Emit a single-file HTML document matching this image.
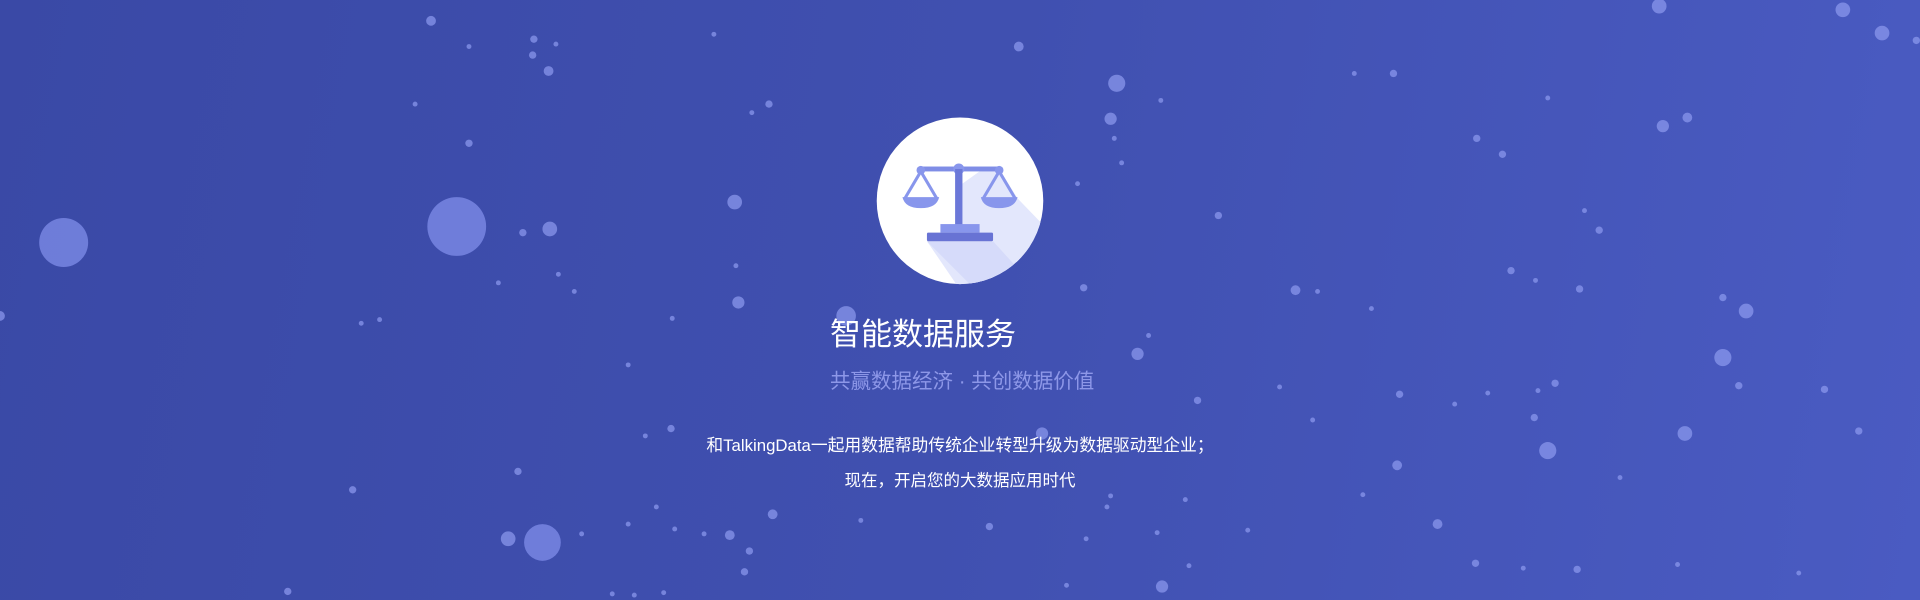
<!DOCTYPE html>
<html><head><meta charset="utf-8"><style>
html,body{margin:0;padding:0;width:1920px;height:600px;overflow:hidden}
body{position:relative;background:linear-gradient(100deg,#3a49a6 0%,#4050b0 50%,#4a5bc2 100%);font-family:"Liberation Sans","Noto Sans CJK SC",sans-serif}
svg{position:absolute;left:0;top:0}
.t{position:absolute;color:#fff;white-space:nowrap}
</style></head><body>
<svg width="1920" height="600" viewBox="0 0 1568 490" preserveAspectRatio="none">
<defs><clipPath id="c"><circle cx="784" cy="164" r="68"/></clipPath></defs>
<g fill="#8e9bf0" opacity="0.7">
<circle cx="352" cy="17" r="4"/><circle cx="383" cy="38" r="2"/><circle cx="436" cy="32" r="3"/><circle cx="454" cy="36" r="2"/><circle cx="435" cy="45" r="3"/><circle cx="448" cy="58" r="4"/><circle cx="583" cy="28" r="2"/><circle cx="832" cy="38" r="4"/><circle cx="912" cy="68" r="7"/><circle cx="948" cy="82" r="2"/><circle cx="1106" cy="60" r="2"/><circle cx="1138" cy="60" r="3"/><circle cx="1264" cy="80" r="2"/><circle cx="1355" cy="5" r="6"/><circle cx="1505" cy="8" r="6"/><circle cx="1537" cy="27" r="6"/><circle cx="1565" cy="33" r="3"/><circle cx="339" cy="85" r="2"/><circle cx="383" cy="117" r="3"/><circle cx="614" cy="92" r="2"/><circle cx="628" cy="85" r="3"/><circle cx="907" cy="97" r="5"/><circle cx="910" cy="113" r="2"/><circle cx="916" cy="133" r="2"/><circle cx="1358" cy="103" r="5"/><circle cx="1378" cy="96" r="4"/><circle cx="1206" cy="113" r="3"/><circle cx="1227" cy="126" r="3"/><circle cx="600" cy="165" r="6"/><circle cx="449" cy="187" r="6"/><circle cx="427" cy="190" r="3"/><circle cx="601" cy="217" r="2"/><circle cx="456" cy="224" r="2"/><circle cx="469" cy="238" r="2"/><circle cx="407" cy="231" r="2"/><circle cx="603" cy="247" r="5"/><circle cx="880" cy="150" r="2"/><circle cx="995" cy="176" r="3"/><circle cx="1294" cy="172" r="2"/><circle cx="1306" cy="188" r="3"/><circle cx="885" cy="235" r="3"/><circle cx="1058" cy="237" r="4"/><circle cx="1076" cy="238" r="2"/><circle cx="1234" cy="221" r="3"/><circle cx="1254" cy="229" r="2"/><circle cx="1290" cy="236" r="3"/><circle cx="1407" cy="243" r="3"/><circle cx="1426" cy="254" r="6"/><circle cx="1120" cy="252" r="2"/><circle cx="295" cy="264" r="2"/><circle cx="310" cy="261" r="2"/><circle cx="0" cy="258" r="4"/><circle cx="549" cy="260" r="2"/><circle cx="691" cy="258" r="8"/><circle cx="938" cy="274" r="2"/><circle cx="929" cy="289" r="5"/><circle cx="513" cy="298" r="2"/><circle cx="1407" cy="292" r="7"/><circle cx="1045" cy="316" r="2"/><circle cx="1143" cy="322" r="3"/><circle cx="1188" cy="330" r="2"/><circle cx="1215" cy="321" r="2"/><circle cx="1256" cy="319" r="2"/><circle cx="1270" cy="313" r="3"/><circle cx="1253" cy="341" r="3"/><circle cx="1420" cy="315" r="3"/><circle cx="1490" cy="318" r="3"/><circle cx="978" cy="327" r="3"/><circle cx="1072" cy="343" r="2"/><circle cx="548" cy="350" r="3"/><circle cx="527" cy="356" r="2"/><circle cx="1376" cy="354" r="6"/><circle cx="1518" cy="352" r="3"/><circle cx="1264" cy="368" r="7"/><circle cx="851" cy="354" r="5"/><circle cx="423" cy="385" r="3"/><circle cx="1141" cy="380" r="4"/><circle cx="288" cy="400" r="3"/><circle cx="1323" cy="390" r="2"/><circle cx="415" cy="440" r="6"/><circle cx="475" cy="436" r="2"/><circle cx="513" cy="428" r="2"/><circle cx="551" cy="432" r="2"/><circle cx="631" cy="420" r="4"/><circle cx="575" cy="436" r="2"/><circle cx="596" cy="437" r="4"/><circle cx="536" cy="414" r="2"/><circle cx="612" cy="450" r="3"/><circle cx="608" cy="467" r="3"/><circle cx="703" cy="425" r="2"/><circle cx="808" cy="430" r="3"/><circle cx="887" cy="440" r="2"/><circle cx="904" cy="414" r="2"/><circle cx="907" cy="405" r="2"/><circle cx="945" cy="435" r="2"/><circle cx="968" cy="408" r="2"/><circle cx="1019" cy="433" r="2"/><circle cx="1113" cy="404" r="2"/><circle cx="1174" cy="428" r="4"/><circle cx="1205" cy="460" r="3"/><circle cx="1244" cy="464" r="2"/><circle cx="1288" cy="465" r="3"/><circle cx="871" cy="478" r="2"/><circle cx="949" cy="479" r="5"/><circle cx="971" cy="462" r="2"/><circle cx="1370" cy="461" r="2"/><circle cx="1469" cy="468" r="2"/><circle cx="235" cy="483" r="3"/><circle cx="500" cy="485" r="2"/><circle cx="518" cy="486" r="2"/><circle cx="542" cy="484" r="2"/>
</g>
<g fill="#7c89e6" opacity="0.8">
<circle cx="52" cy="198" r="20"/><circle cx="373" cy="185" r="24"/><circle cx="443" cy="443" r="15"/>
</g>
<circle cx="784" cy="164" r="68" fill="#fff"/>
<g clip-path="url(#c)">
<polygon points="816,138 831,162 860,192 860,260 800,260 757,197 811,197 786,185 786,150 800,140" fill="#e3e7fc"/>
<polygon points="757,197 811,197 850,240 800,240" fill="#d6dbfa"/>
</g>
<rect x="752" y="136" width="64" height="4" fill="#7f8de6"/>
<circle cx="783" cy="138" r="4.5" fill="#8896ec"/>
<circle cx="752" cy="139" r="3.5" fill="#8896ec"/><circle cx="816" cy="139" r="3.5" fill="#8896ec"/>
<path d="M752,140 L739,162 M752,140 L765,162 M816,140 L803,162 M816,140 L829,162" stroke="#8896ec" stroke-width="2.5" fill="none"/>
<path d="M737,161 L767,161 Q765,170 752,170 Q739,170 737,161Z" fill="#8896ec"/>
<path d="M801,161 L831,161 Q829,170 816,170 Q803,170 801,161Z" fill="#8896ec"/>
<rect x="780" y="138" width="6" height="47" fill="#6b78d8"/>
<rect x="768" y="183" width="32" height="7" fill="#8896ec"/>
<rect x="757" y="190" width="54" height="7" rx="1" fill="#6873d4"/>
</svg>
<div class="t" style="left:830px;top:315px;font-size:31px;line-height:40px">智能数据服务</div>
<div class="t" style="left:830px;top:369px;font-size:20.5px;line-height:26px;color:#8d97e8">共赢数据经济 · 共创数据价值</div>
<div class="t" style="left:0;width:1920px;text-align:center;top:436px;font-size:16.8px;line-height:20px">和TalkingData一起用数据帮助传统企业转型升级为数据驱动型企业；</div>
<div class="t" style="left:0;width:1920px;text-align:center;top:471px;font-size:16.5px;line-height:20px">现在，开启您的大数据应用时代</div>
</body></html>
